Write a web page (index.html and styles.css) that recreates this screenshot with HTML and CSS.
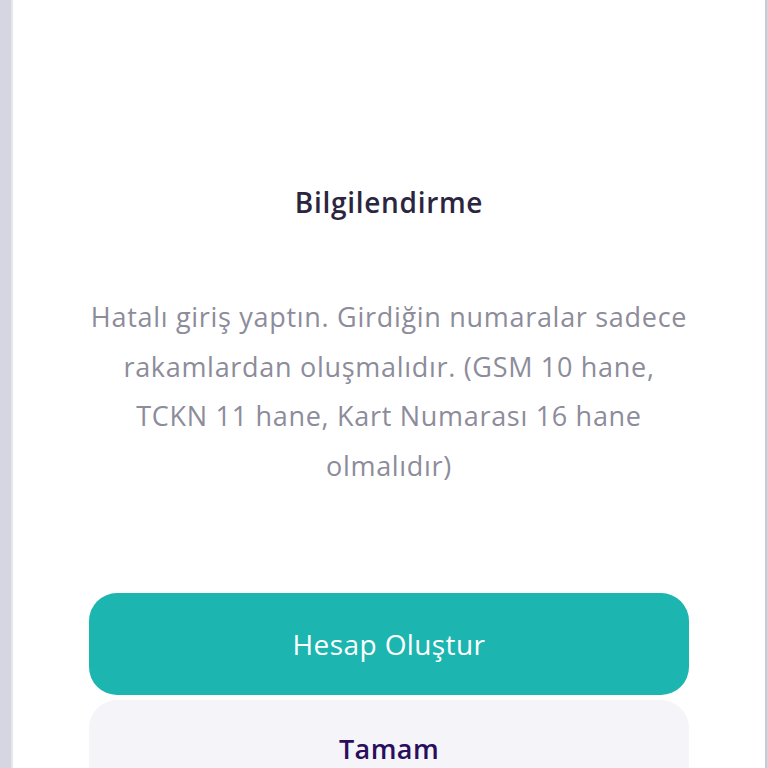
FILE: index.html
```html
<!DOCTYPE html>
<html lang="tr">
<head>
<meta charset="utf-8">
<title>Bilgilendirme</title>
<link rel="stylesheet" href="styles.css">
</head>
<body>
<div class="screen">
  <div class="edge"></div>
  <div class="card">
    <h1 class="title">Bilgilendirme</h1>
    <p class="message">Hatalı giriş yaptın. Girdiğin numaralar sadece<br>rakamlardan oluşmalıdır. (GSM 10 hane,<br>TCKN 11 hane, Kart Numarası 16 hane<br>olmalıdır)</p>
    <div class="actions">
      <button class="btn btn-primary" type="button">Hesap Oluştur</button>
      <button class="btn btn-secondary" type="button">Tamam</button>
    </div>
  </div>
</div>
</body>
</html>
```

FILE: styles.css
```css
* { box-sizing: border-box; }
html, body {
  margin: 0;
  padding: 0;
  height: 768px;
  overflow: hidden;
  background: #d6d6e2;
  font-family: "Open Sans", "Noto Sans", sans-serif;
}
.screen {
  display: flex;
  height: 768px;
}
.edge {
  width: 13px;
  background: #d6d6e2;
  border-right: 2px solid #e6e6ef;
  flex: none;
}
.card {
  flex: 1;
  background: #ffffff;
  border-right: 2px solid #c9c9d6;
  display: flex;
  flex-direction: column;
  align-items: center;
  padding: 184px 75px 0 75px;
  margin-right: 1px;
}
.title {
  margin: 0;
  font-size: 28px;
  line-height: 36px;
  font-weight: 600;
  color: #2b2540;
  letter-spacing: 0.7px;
}
.message {
  margin: 72px 0 0 0;
  font-size: 27px;
  line-height: 49.5px;
  font-weight: 400;
  color: #8c8c9a;
  text-align: center;
  white-space: nowrap;
  letter-spacing: 0.7px;
}
.actions {
  margin-top: 103px;
  width: 600px;
  display: flex;
  flex-direction: column;
  gap: 5px;
}
.btn {
  width: 100%;
  border: none;
  font-family: inherit;
  font-size: 28px;
  font-weight: 500;
  height: 102px;
  border-radius: 28px;
  padding: 0;
  letter-spacing: 0.4px;
}
.btn-primary {
  background: #1cb5b0;
  color: #ffffff;
}
.btn-secondary {
  background: #f5f5f9;
  color: #2a0e5e;
  font-size: 27px;
  font-weight: 600;
  padding-bottom: 6px;
}
```
